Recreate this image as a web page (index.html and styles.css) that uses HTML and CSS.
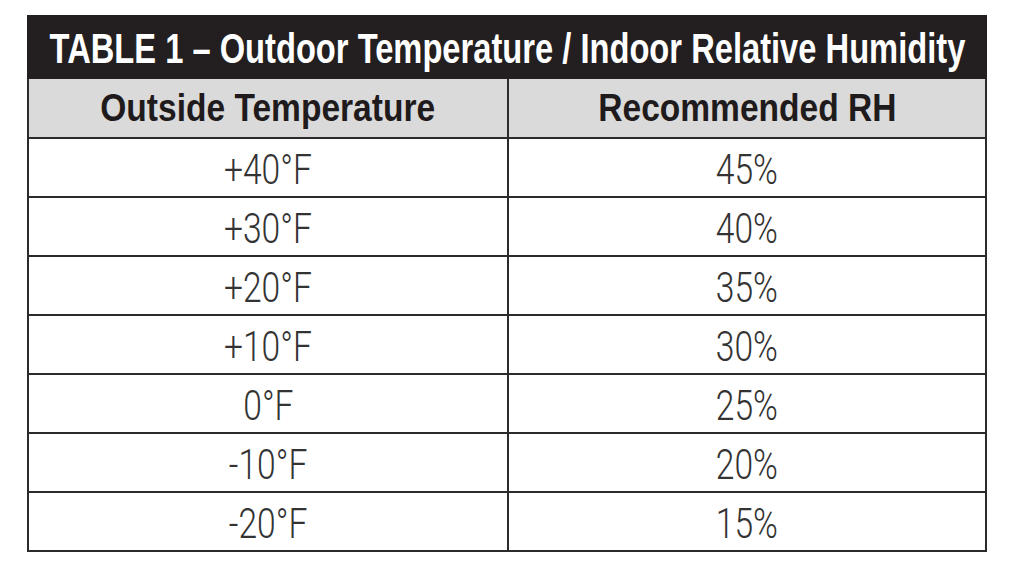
FILE: index.html
```html
<!DOCTYPE html>
<html>
<head>
<meta charset="utf-8">
<link rel="stylesheet" href="styles.css">
</head>
<body>
<div class="page">
  <div class="sheet">
    <div class="title"><span class="squeeze title-text">TABLE 1 – Outdoor Temperature / Indoor Relative Humidity</span></div>
    <table class="rh">
      <thead>
        <tr><th><span class="squeeze head-text">Outside Temperature</span></th><th><span class="squeeze head-text">Recommended RH</span></th></tr>
      </thead>
      <tbody>
        <tr><td><span class="squeeze cell-text">+40°F</span></td><td><span class="squeeze cell-text">45%</span></td></tr>
        <tr><td><span class="squeeze cell-text">+30°F</span></td><td><span class="squeeze cell-text">40%</span></td></tr>
        <tr><td><span class="squeeze cell-text">+20°F</span></td><td><span class="squeeze cell-text">35%</span></td></tr>
        <tr><td><span class="squeeze cell-text">+10°F</span></td><td><span class="squeeze cell-text">30%</span></td></tr>
        <tr><td><span class="squeeze cell-text">0°F</span></td><td><span class="squeeze cell-text">25%</span></td></tr>
        <tr><td><span class="squeeze cell-text">-10°F</span></td><td><span class="squeeze cell-text">20%</span></td></tr>
        <tr><td><span class="squeeze cell-text">-20°F</span></td><td><span class="squeeze cell-text">15%</span></td></tr>
      </tbody>
    </table>
  </div>
</div>
</body>
</html>
```
FILE: styles.css
```css
html, body {
  margin: 0;
  padding: 0;
  background: #ffffff;
  overflow: hidden;
}
.page {
  padding: 15px 0 0 27px;
}
.sheet {
  width: 960px;
  font-family: "Liberation Sans", Arial, sans-serif;
}
.squeeze {
  display: inline-block;
  white-space: nowrap;
  transform-origin: center center;
}
.title {
  height: 64px;
  background: #231f20;
  color: #ffffff;
  display: flex;
  justify-content: center;
  align-items: center;
  overflow: hidden;
}
.title-text {
  font-weight: bold;
  font-size: 43px;
  line-height: 48px;
  padding-top: 1px;
  transform: scaleX(0.76);
}
.rh {
  width: 960px;
  border-collapse: collapse;
  table-layout: fixed;
}
.rh th, .rh td {
  border: 2px solid #2b2b2b;
  text-align: center;
  vertical-align: middle;
  padding: 0;
}
.rh th {
  height: 58px;
  background: #dadada;
  color: #1f1b1c;
  border-top: none;
}
.head-text {
  font-size: 39px;
  font-weight: bold;
  line-height: 44px;
  transform: scaleX(0.86);
}
.rh td {
  height: 52px;
  padding-top: 5px;
  color: #333333;
}
.cell-text {
  font-family: Roboto, "Liberation Sans", sans-serif;
  font-size: 42px;
  font-weight: 300;
  line-height: 46px;
  transform: scaleX(0.8);
}
.rh th:first-child, .rh td:first-child {
  width: 478px;
}
```
